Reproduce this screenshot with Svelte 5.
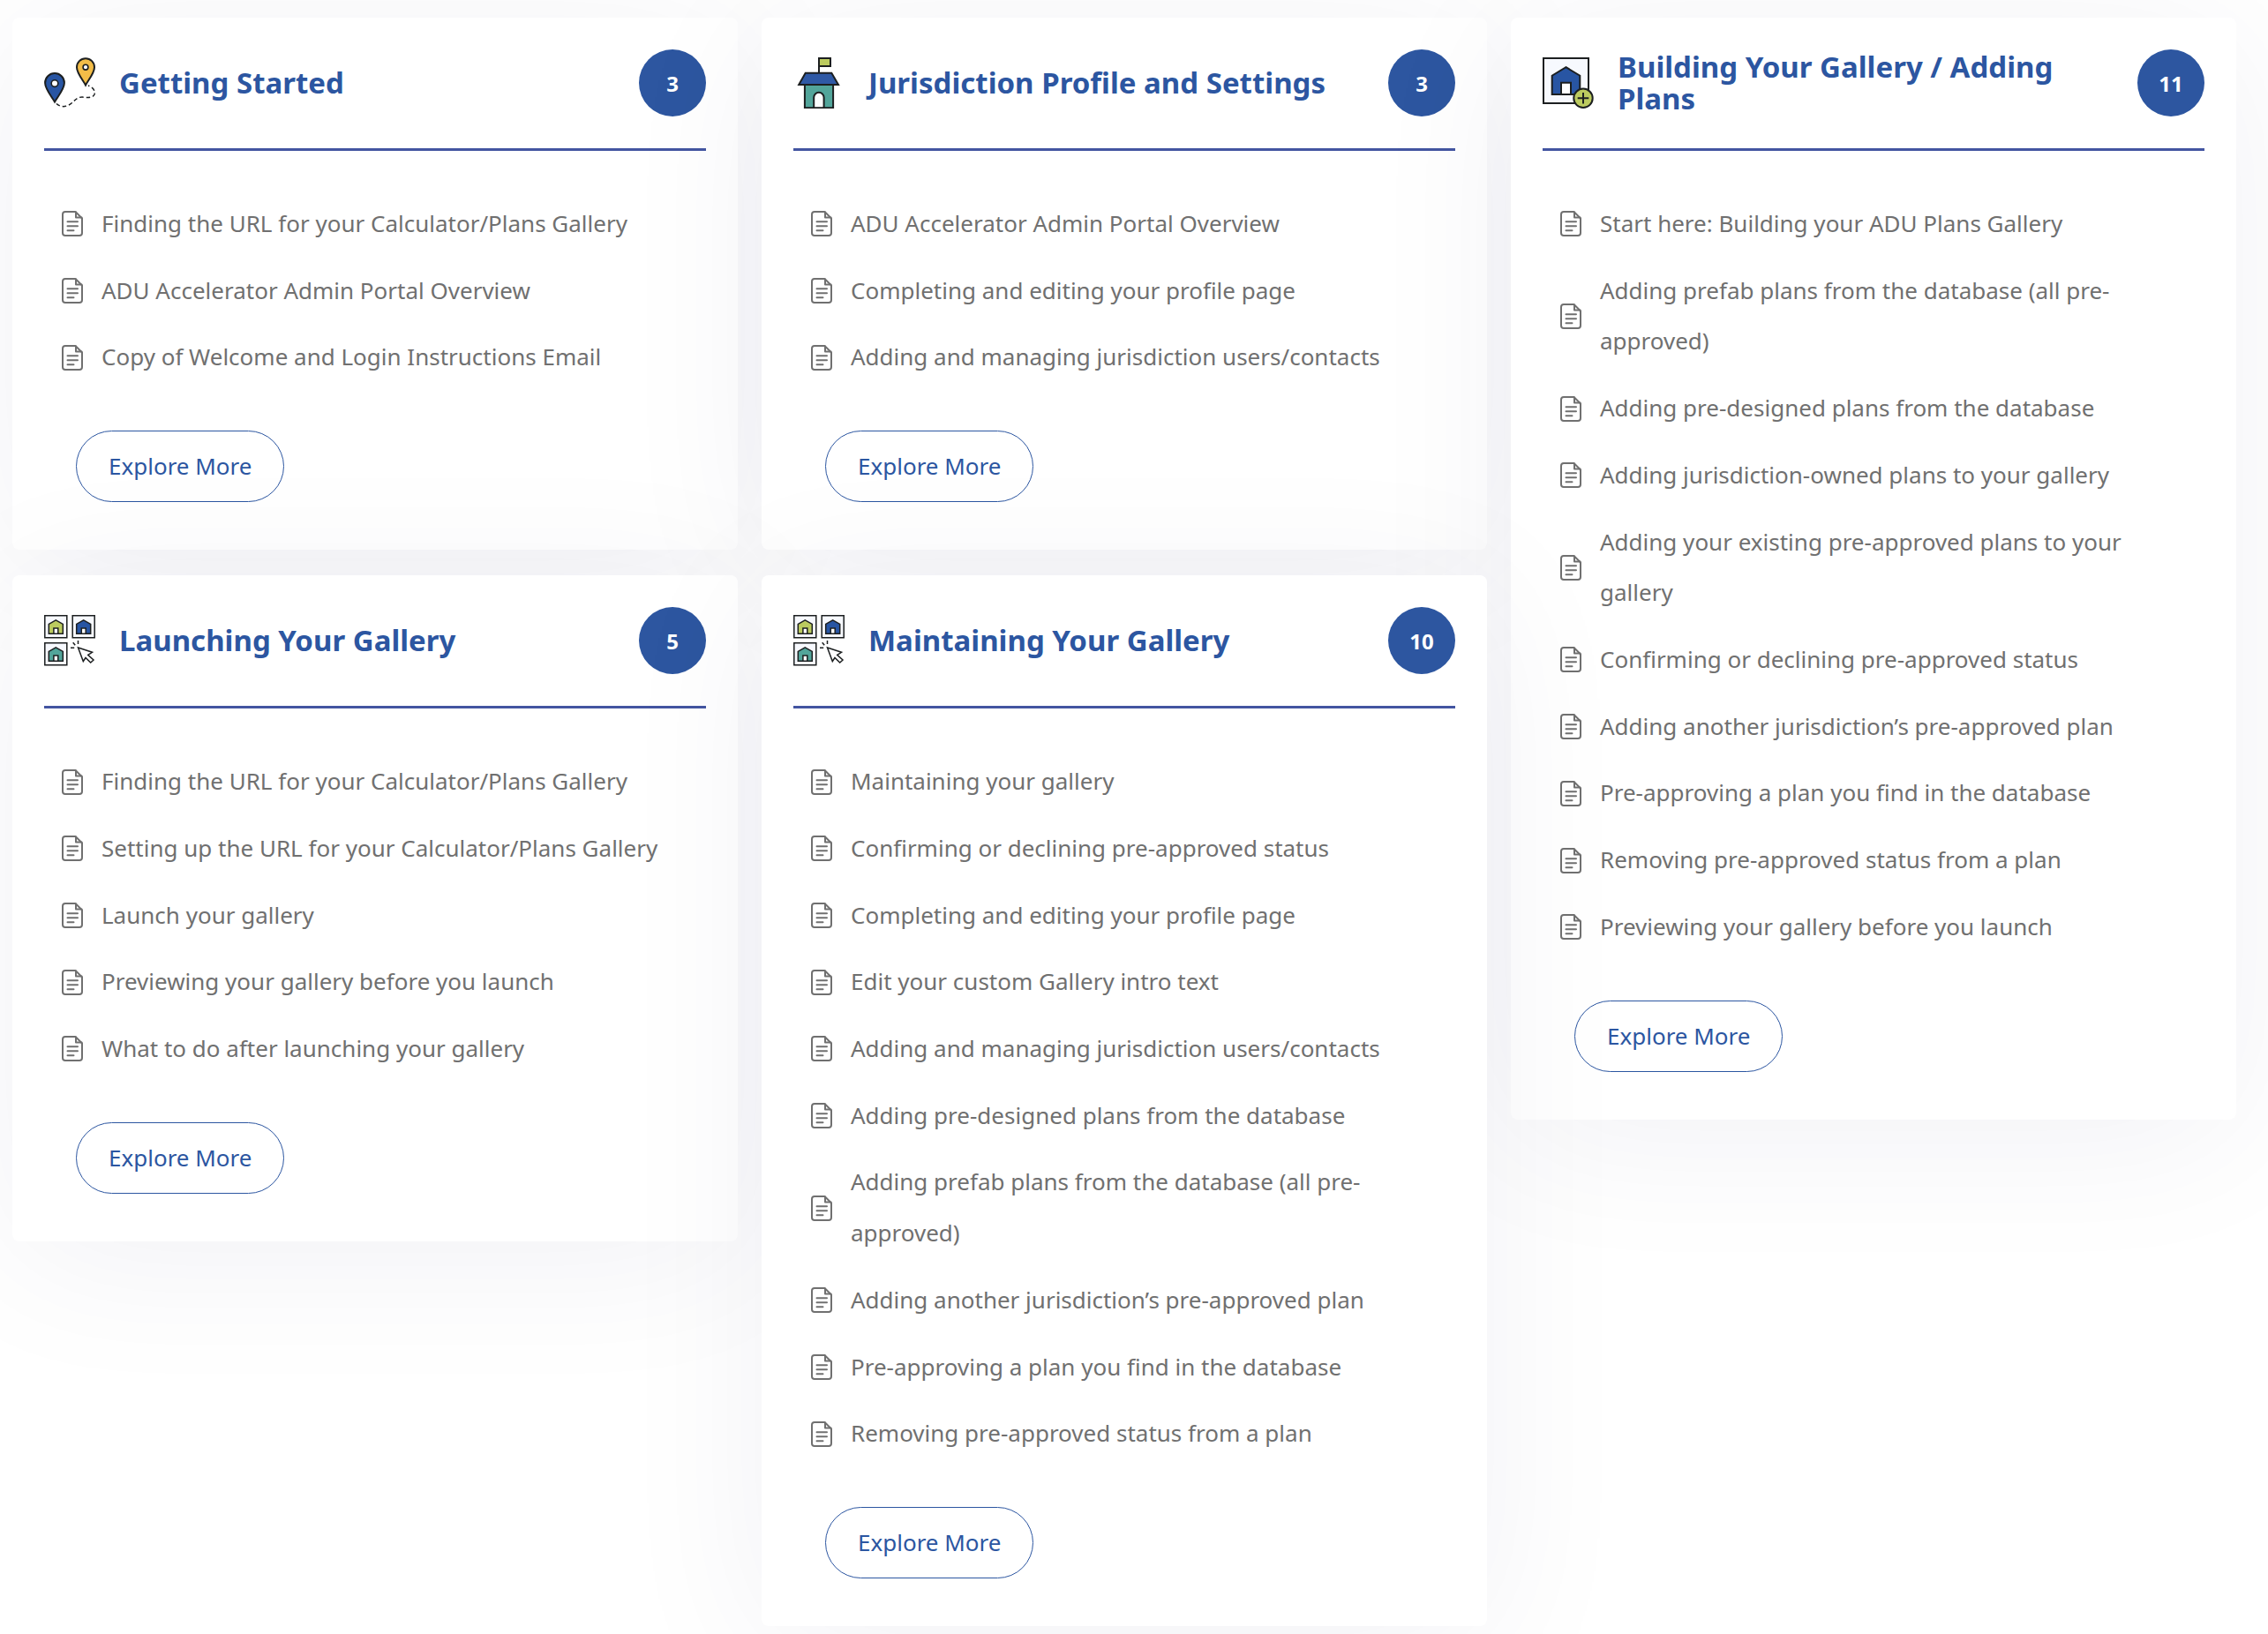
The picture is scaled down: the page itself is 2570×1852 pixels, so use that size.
<script>
  const findUrl = 'Finding the URL for your Calculator/Plans Gallery';
  const overview = 'ADU Accelerator Admin Portal Overview';
  const profile = 'Completing and editing your profile page';
  const contacts = 'Adding and managing jurisdiction users/contacts';
  const prefab = 'Adding prefab plans from the database (all pre-approved)';
  const predesigned = 'Adding pre-designed plans from the database';
  const status = 'Confirming or declining pre-approved status';
  const another = 'Adding another jurisdiction’s pre-approved plan';
  const preapproving = 'Pre-approving a plan you find in the database';
  const removing = 'Removing pre-approved status from a plan';
  const previewing = 'Previewing your gallery before you launch';

  // order is the stacking order of the cards, so later shadows fall on earlier cards
  const columns = [
    [
      {
        order: 1,
        icon: 'route',
        title: 'Getting Started',
        count: 3,
        articles: [findUrl, overview, 'Copy of Welcome and Login Instructions Email']
      },
      {
        order: 4,
        icon: 'tiles',
        title: 'Launching Your Gallery',
        count: 5,
        articles: [
          findUrl,
          'Setting up the URL for your Calculator/Plans Gallery',
          'Launch your gallery',
          previewing,
          'What to do after launching your gallery'
        ]
      }
    ],
    [
      {
        order: 2,
        icon: 'hall',
        title: 'Jurisdiction Profile and Settings',
        count: 3,
        articles: [overview, profile, contacts]
      },
      {
        order: 5,
        icon: 'tiles',
        title: 'Maintaining Your Gallery',
        count: 10,
        articles: [
          'Maintaining your gallery',
          status,
          profile,
          'Edit your custom Gallery intro text',
          contacts,
          predesigned,
          prefab,
          another,
          preapproving,
          removing
        ]
      }
    ],
    [
      {
        order: 3,
        icon: 'plan',
        title: 'Building Your Gallery / Adding Plans',
        count: 11,
        articles: [
          'Start here: Building your ADU Plans Gallery',
          prefab,
          predesigned,
          'Adding jurisdiction-owned plans to your gallery',
          'Adding your existing pre-approved plans to your gallery',
          status,
          another,
          preapproving,
          removing,
          previewing
        ]
      }
    ]
  ];

  const tiles = [
    { x: 0, y: 0, fill: '#bccb5f' },
    { x: 31.4, y: 0, fill: '#2855a3' },
    { x: 0, y: 31, fill: '#52a59a' }
  ];
</script>

<main class="categories">
  {#each columns as column}
    <div class="column">
      {#each column as card}
        <section class="card" style:z-index={card.order}>
          <header class="card-header">
            <svg class="card-icon" viewBox="0 0 58 58" aria-hidden="true">
              {#if card.icon === 'route'}
                <path class="pin" fill="#2855a3" d="M12 50.5C9 45 1.1 36 1.1 29a10.9 10.9 0 0 1 21.8 0C22.9 36 15 45 12 50.5Z" />
                <circle class="hole" cx="12" cy="29.6" r="3.8" />
                <path class="pin" fill="#f3bd48" d="M47 31.5C44.3 26 37 18 37 11.2a10 10 0 0 1 20 0C57 18 49.7 26 47 31.5Z" />
                <circle class="hole" cx="47" cy="11.2" r="2.9" />
                <path class="trail" d="M14 52.5C18 56.5 25 57 31 52C36 47.500 38 45 43 45C49 45.5 55 46.5 57 42C58.5 37 54 33.5 50 32" />
              {:else if card.icon === 'hall'}
                <path d="M29 18V1h13v9H29" fill="#bccb5f" />
                <path d="M12.9 31h32.2v26.200H12.9Z" fill="#52a59a" />
                <path d="M13.7 17.8h29.6L51 31H6.2Z" fill="#2f59a5" />
                <path d="M23.2 57.2V45.5a5.7 5.7 0 0 1 11.4 0v11.7Z" fill="#fbfdfd" />
              {:else if card.icon === 'plan'}
                <path d="M1 1h51v51H1Z" fill="#f7f9fe" />
                <path d="M26.5 11.2L42.3 20.7V42H10.7V20.7Z" fill="#2855a3" />
                <path d="M21 42V28.7h11V42Z" fill="#fff" />
                <circle cx="46" cy="46.3" r="10.7" fill="#bccb5f" />
                <path d="M46 40v12.6M39.7 46.3h12.6" />
              {:else}
                {#each tiles as tile}
                  <g transform="translate({tile.x} {tile.y})" class="tile">
                    <path d="M.8.8h25v25H.8Z" fill="#f7f9fe" />
                    <path d="M13.3 5.9L21.3 10.4V21.3H5.3V10.4Z" fill={tile.fill} />
                    <path d="M10.9 21.3V14.9h4.9v6.4Z" fill="#fff" />
                  </g>
                {/each}
                <g class="tile">
                  <path d="M38.5 37L54.5 42.3L49.7 45.3L56 51L52.7 54L47 48.5L44.3 52.5Z" fill="#fff" />
                  <path d="M38.5 29v4M32.7 31.3l2.5 3M30 37.3h4.2" />
                </g>
              {/if}
            </svg>
            <h2 class="title">{card.title}</h2>
            <span class="count">{card.count}</span>
          </header>

          <div class="card-body">
            <ul class="articles">
              {#each card.articles as article}
                <li class="article">
                  <svg class="doc-icon" viewBox="0 0 24 29" aria-hidden="true">
                    <path d="M4 1h11.5L23 8.5V25a3 3 0 0 1-3 3H4a3 3 0 0 1-3-3V4a3 3 0 0 1 3-3Z" />
                    <path d="M16 1.5V7.5H22.5M6.5 12.3h11.5M6.5 17.3h11.5M6.5 22.3h7" />
                  </svg>
                  <a href="#article">{article}</a>
                </li>
              {/each}
            </ul>
            <a class="explore" href="#category">Explore More</a>
          </div>
        </section>
      {/each}
    </div>
  {/each}
</main>

<style>
  :global(body) {
    margin: 0;
    background: #fff;
  }
  .categories {
    display: grid;
    grid-template-columns: repeat(3, minmax(0, 1fr));
    align-items: start;
    gap: 27px;
    padding: 20px 36px 12px 14px;
    font-family: 'Noto Sans', sans-serif;
    font-size: 26px;
    color: #707070;
    overflow: hidden;
  }
  .column {
    display: flex;
    flex-direction: column;
    gap: 29px;
  }
  .card {
    position: relative;
    background: #fff;
    border-radius: 8px;
    box-shadow: 0 20px 180px rgba(0, 9, 78, 0.06);
  }
  .card-header {
    display: flex;
    align-items: center;
    gap: 27px;
    margin: 0 36px;
    padding: 36px 0;
    border-bottom: 3px solid #4355a1;
  }
  .card-icon {
    flex: none;
    width: 58px;
    height: 58px;
    fill: none;
    stroke: #1c1f20;
    stroke-width: 2;
  }
  .hole {
    fill: #fff;
    stroke-width: 1.6;
  }
  .trail {
    stroke-width: 1.5;
    stroke-dasharray: 4.5 3;
  }
  .tile {
    stroke-width: 1.5;
  }
  .title {
    flex: 1;
    margin: 0;
    font-size: 33px;
    font-weight: 700;
    line-height: 36px;
    color: #2c56a1;
  }
  .count {
    flex: none;
    display: grid;
    place-items: center;
    width: 76px;
    height: 76px;
    border-radius: 50%;
    background: #2d56a0;
    color: #fff;
    font-size: 24px;
    font-weight: 700;
  }
  .card-body {
    padding: 54px 72px;
  }
  .articles {
    display: flex;
    flex-direction: column;
    gap: 18px;
    margin: 0 -16px 54px;
    padding: 0;
    list-style: none;
  }
  .article {
    display: flex;
    align-items: center;
    gap: 21px;
    line-height: 2.22;
  }
  .article a {
    color: inherit;
    text-decoration: none;
  }
  .doc-icon {
    flex: none;
    width: 24px;
    height: 29px;
    fill: none;
    stroke: #707070;
    stroke-width: 2;
    stroke-linecap: round;
    stroke-linejoin: round;
  }
  .explore {
    display: inline-block;
    padding: 0 36px;
    border: 1px solid #2c56a1;
    border-radius: 41px;
    color: #2c56a1;
    line-height: 79px;
    text-decoration: none;
    vertical-align: top;
  }
  .article a:hover,
  .explore:hover {
    text-decoration: underline;
  }
</style>
